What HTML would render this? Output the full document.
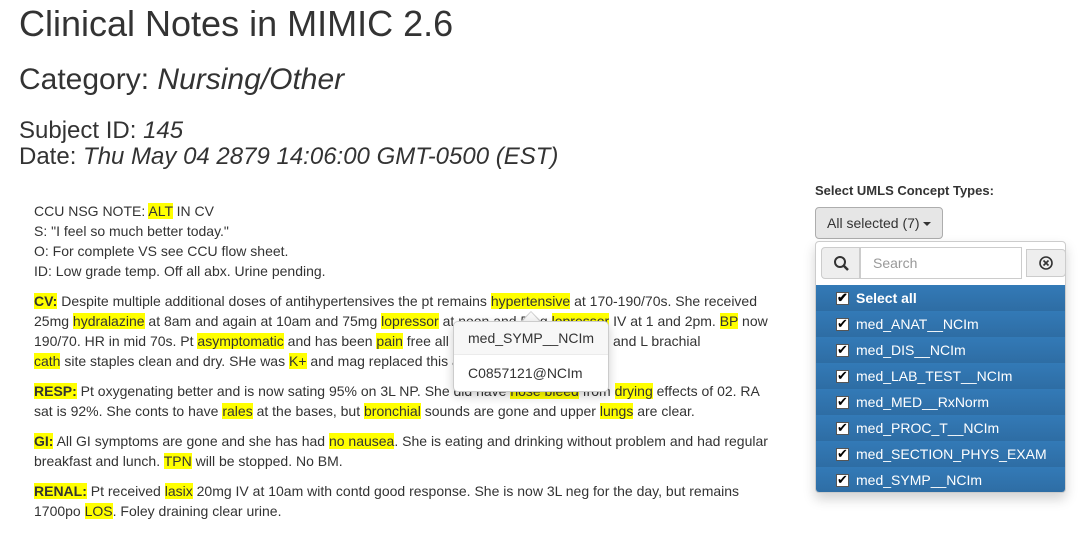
<!DOCTYPE html>
<html><head><meta charset="utf-8"><style>
body{margin:0;width:1088px;height:538px;overflow:hidden;font-family:"Liberation Sans",Arial,sans-serif;color:#333;background:#fff;position:relative}
h1{position:absolute;left:19px;top:3px;margin:0;font-weight:400;font-size:36px}
h2{position:absolute;left:19px;top:63px;margin:0;font-weight:400;font-size:30px}
.sub{position:absolute;left:19px;top:118px;font-size:24px;line-height:26px}
.notes{position:absolute;left:34px;top:201px;font-size:14px;line-height:20px;white-space:nowrap}
.notes p{margin:0 0 10px}
mark{background:#ff0;color:#333;padding:0}
.lbl{position:absolute;left:815px;top:183px;font-weight:bold;font-size:13px}
.btn{position:absolute;left:815px;top:207px;width:128px;height:32px;border:1px solid #adadad;border-radius:4px;background:#e6e6e6;box-sizing:border-box;font-size:14px;line-height:30px;padding-left:11px}
.caret{display:inline-block;border-top:4px solid #333;border-left:4px solid transparent;border-right:4px solid transparent;vertical-align:middle;margin-left:3px}
.menu{position:absolute;left:815px;top:241px;width:251px;height:252px;border:1px solid #ccc;border-radius:4px;box-sizing:border-box;background:#fff;box-shadow:0 6px 12px rgba(0,0,0,.18);overflow:hidden}
.search{position:absolute;left:5px;top:5px;width:241px;height:32px}
.sico{position:absolute;left:0;top:0;width:39px;height:32px;border:1px solid #ccc;background:#eee;box-sizing:border-box;border-radius:4px 0 0 4px}
.sin{position:absolute;left:39px;top:0;width:162px;height:32px;border:1px solid #ccc;box-sizing:border-box;color:#999;font-size:14px;line-height:30px;padding-left:12px}
.sclr{position:absolute;left:205px;top:2px;width:40px;height:28px;border:1px solid #ccc;background:#eee;box-sizing:border-box;border-radius:0 4px 4px 0}
.item{position:absolute;left:0;width:251px;height:26px;background:#337ab7;background:linear-gradient(#337ab7,#2e6da4);color:#fff;font-size:14px;line-height:26px;padding-left:40px;box-sizing:border-box}
.item:before{content:"";position:absolute;left:20px;top:7px;width:13px;height:13px;background:#fff;border:1px solid #555;box-sizing:border-box}
.item:after{content:"✔";position:absolute;left:21px;top:0;color:#000;font-size:13px}
.pop{position:absolute;left:453px;top:321px;width:156px;height:71px;border:1px solid #ccc;border-radius:5px;background:#fff;box-shadow:0 4px 10px rgba(0,0,0,.2);box-sizing:border-box;font-size:14px}
.pop .t{height:32px;line-height:32px;padding-left:14px;border-bottom:1px solid #ebebeb;background:#f7f7f7;border-radius:5px 5px 0 0}
.pop .c{line-height:36px;padding-left:14px}
.arr{position:absolute;left:521px;top:311px;width:0;height:0;border-left:10px solid transparent;border-right:10px solid transparent;border-bottom:10px solid #ccc}
.arr2{position:absolute;left:522px;top:312px;width:0;height:0;border-left:9px solid transparent;border-right:9px solid transparent;border-bottom:10px solid #f7f7f7}
</style></head><body>
<h1>Clinical Notes in MIMIC 2.6</h1>
<h2>Category: <i>Nursing/Other</i></h2>
<div class="sub">Subject ID: <i>145</i><br>Date: <i>Thu May 04 2879 14:06:00 GMT-0500 (EST)</i></div>
<div class="notes">
<p>CCU NSG NOTE: <mark>ALT</mark> IN CV<br>S: "I feel so much better today."<br>O: For complete VS see CCU flow sheet.<br>ID: Low grade temp. Off all abx. Urine pending.</p>
<p><mark><b>CV:</b></mark> Despite multiple additional doses of antihypertensives the pt remains <mark>hypertensive</mark> at 170-190/70s. She received<br>25mg <mark>hydralazine</mark> at 8am and again at 10am and 75mg <mark>lopressor</mark> at noon and 5mg <mark>lopressor</mark> IV at 1 and 2pm. <mark>BP</mark> now<br>190/70. HR in mid 70s. Pt <mark>asymptomatic</mark> and has been <mark>pain</mark> free all shift. Pulses are palpable and L brachial<br><mark>cath</mark> site staples clean and dry. SHe was <mark>K+</mark> and mag replaced this am.</p>
<p><mark><b>RESP:</b></mark> Pt oxygenating better and is now sating 95% on 3L NP. She did have <mark>nose bleed</mark> from <mark>drying</mark> effects of 02. RA<br>sat is 92%. She conts to have <mark>rales</mark> at the bases, but <mark>bronchial</mark> sounds are gone and upper <mark>lungs</mark> are clear.</p>
<p><mark><b>GI:</b></mark> All GI symptoms are gone and she has had <mark>no nausea</mark>. She is eating and drinking without problem and had regular<br>breakfast and lunch. <mark>TPN</mark> will be stopped. No BM.</p>
<p><mark><b>RENAL:</b></mark> Pt received <mark>lasix</mark> 20mg IV at 10am with contd good response. She is now 3L neg for the day, but remains<br>1700po <mark>LOS</mark>. Foley draining clear urine.</p>
</div>
<div class="arr"></div><div class="arr2"></div>
<div class="pop"><div class="t">med_SYMP__NCIm</div><div class="c">C0857121@NCIm</div></div>
<div class="lbl">Select UMLS Concept Types:</div>
<div class="btn">All selected (7)<span class="caret"></span></div>
<div class="menu">
<div class="search">
<div class="sico"><svg width="39" height="32"><circle cx="18" cy="14" r="5" fill="none" stroke="#333" stroke-width="2"/><line x1="22" y1="18" x2="26" y2="22" stroke="#333" stroke-width="2.5"/></svg></div>
<div class="sin">Search</div>
<div class="sclr"><svg width="38" height="26"><circle cx="19" cy="13" r="6" fill="none" stroke="#333" stroke-width="1.6"/><path d="M16.5 10.5l5 5M21.5 10.5l-5 5" stroke="#333" stroke-width="1.6"/></svg></div>
</div>
<div class="item" style="top:43px;font-weight:bold">Select all</div>
<div class="item" style="top:69px">med_ANAT__NCIm</div>
<div class="item" style="top:95px">med_DIS__NCIm</div>
<div class="item" style="top:121px">med_LAB_TEST__NCIm</div>
<div class="item" style="top:147px">med_MED__RxNorm</div>
<div class="item" style="top:173px">med_PROC_T__NCIm</div>
<div class="item" style="top:199px">med_SECTION_PHYS_EXAM</div>
<div class="item" style="top:225px">med_SYMP__NCIm</div>
</div>
</body></html>
